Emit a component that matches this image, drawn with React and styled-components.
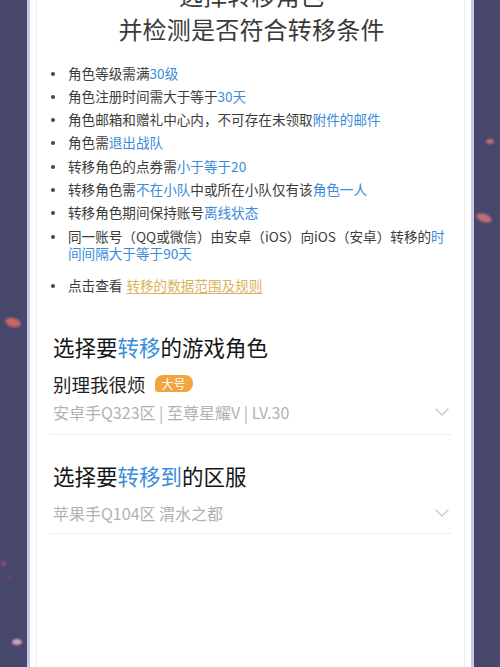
import React from 'react';
import styled, { createGlobalStyle } from 'styled-components';

const GlobalStyle = createGlobalStyle`
    html, body {
        margin: 0;
        padding: 0;
        background: #46476b;
        font-family: "Noto Sans CJK SC", "Noto Sans", sans-serif;
    }
    #root {
        min-height: 100vh;
    }
`;

const Page = styled.div`
    position: relative;
    height: 667px;
    overflow: hidden;
    background: #46476b;
    padding: 0 26px 0 27px;
`;

const Blob = styled.span`
    position: absolute;
    border-radius: 50%;
    background: ${(p) => p.color || '#d9747e'};
    filter: blur(1px);
    opacity: 0.85;
`;

const Frame = styled.div`
    height: 100%;
    background: #fff;
    border-left: 3px solid #cbc7e9;
    border-right: 3px solid #cbc7e9;
    padding: 0 6px;
`;

const Card = styled.div`
    display: flow-root;
    height: 100%;
    border-left: 1px solid #ececf0;
    border-right: 1px solid #ececf0;
    padding: 0 10px 0 12px;
`;

const Title = styled.h1`
    margin: -22px 0 0;
    font-size: 24px;
    line-height: 34px;
    font-weight: 400;
    color: #3a3a3a;
    text-align: center;
    letter-spacing: 0.2px;
`;

const Rules = styled.ul`
    list-style: none;
    margin: 18.5px 0 0;
    padding: 0 0 0 2px;
`;

const Rule = styled.li`
    position: relative;
    padding-left: 17px;
    font-size: 13.6px;
    line-height: 17px;
    color: #3c3c3c;
    margin-bottom: 6.3px;
    margin-top: ${(p) => (p.spaced ? '15px' : '0')};
    &::before {
        content: '';
        position: absolute;
        left: 0;
        top: 7px;
        width: 4px;
        height: 4px;
        border-radius: 50%;
        background: #444;
    }
`;

const Hi = styled.span`
    color: #3a8bd9;
`;

const Link = styled.a`
    color: #d9b45c;
    text-decoration: underline;
    text-underline-offset: 2px;
    margin-left: 4px;
`;

const Section = styled.div`
    margin-top: ${(p) => p.top || '0'};
    padding: 0 4px;
`;

const Heading = styled.h2`
    margin: 0;
    font-size: 21.5px;
    line-height: 30px;
    font-weight: 400;
    color: #151515;
`;

const RoleRow = styled.div`
    display: flex;
    align-items: center;
    gap: 9px;
    margin-top: 9px;
    font-size: 18.5px;
    line-height: 26px;
    color: #1f1f1f;
`;

const Badge = styled.span`
    display: inline-flex;
    align-items: center;
    justify-content: center;
    height: 17px;
    padding: 0 7px;
    border-radius: 8px 8px 8px 3px;
    background: #f2a53c;
    color: #fff;
    font-size: 12px;
    line-height: 17px;
`;

const Select = styled.div`
    display: flex;
    align-items: center;
    justify-content: space-between;
    padding: ${(p) => p.pad || '3px'} 0 ${(p) => p.bottom || '11px'} 4px;
    border-bottom: 1px solid #efefef;
    margin: 0 -2px 0 -4px;
    font-size: 16px;
    line-height: 22px;
    color: #b2b2b2;
`;

const Chevron = () => (
    <svg width="14" height="8" viewBox="0 0 14 8" fill="none" style={{ marginRight: 3 }}>
        <path d="M1 1l6 6 6-6" stroke="#c9c9c9" strokeWidth="1.4" strokeLinecap="round" strokeLinejoin="round" />
    </svg>
);

const App = () => {
    return (
        <>
            <GlobalStyle />
            <Page>
                <Blob style={{ left: 486, top: 139, width: 8, height: 5 }} />
                <Blob style={{ left: 476, top: 214, width: 16, height: 8, transform: 'rotate(20deg)' }} />
                <Blob style={{ left: 5, top: 318, width: 16, height: 9, transform: 'rotate(15deg)' }} color="#e46a63" />
                <Blob style={{ left: 1, top: 561, width: 5, height: 5 }} color="#a84a68" />
                <Blob style={{ left: 8, top: 576, width: 4, height: 4 }} color="#8e4264" />
                <Blob style={{ left: 12, top: 639, width: 10, height: 6 }} color="#e8b8c8" />
                <Frame>
                    <Card>
                        <Title>
                            选择转移角色
                            <br />
                            并检测是否符合转移条件
                        </Title>
                        <Rules>
                            <Rule>角色等级需满<Hi>30级</Hi></Rule>
                            <Rule>角色注册时间需大于等于<Hi>30天</Hi></Rule>
                            <Rule>角色邮箱和赠礼中心内，不可存在未领取<Hi>附件的邮件</Hi></Rule>
                            <Rule>角色需<Hi>退出战队</Hi></Rule>
                            <Rule>转移角色的点券需<Hi>小于等于20</Hi></Rule>
                            <Rule>转移角色需<Hi>不在小队</Hi>中或所在小队仅有该<Hi>角色一人</Hi></Rule>
                            <Rule>转移角色期间保持账号<Hi>离线状态</Hi></Rule>
                            <Rule>同一账号（QQ或微信）由安卓（iOS）向iOS（安卓）转移的<Hi>时间间隔大于等于90天</Hi></Rule>
                            <Rule spaced>点击查看<Link>转移的数据范围及规则</Link></Rule>
                        </Rules>
                        <Section top="38px">
                            <Heading>选择要<Hi>转移</Hi>的游戏角色</Heading>
                            <RoleRow>
                                别理我很烦
                                <Badge>大号</Badge>
                            </RoleRow>
                            <Select pad="4px">
                                安卓手Q323区 | 至尊星耀V | LV.30
                                <Chevron />
                            </Select>
                        </Section>
                        <Section top="26px">
                            <Heading>选择要<Hi>转移到</Hi>的区服</Heading>
                            <Select pad="11px" bottom="9px">
                                苹果手Q104区 渭水之都
                                <Chevron />
                            </Select>
                        </Section>
                    </Card>
                </Frame>
            </Page>
        </>
    );
};

export default App;
